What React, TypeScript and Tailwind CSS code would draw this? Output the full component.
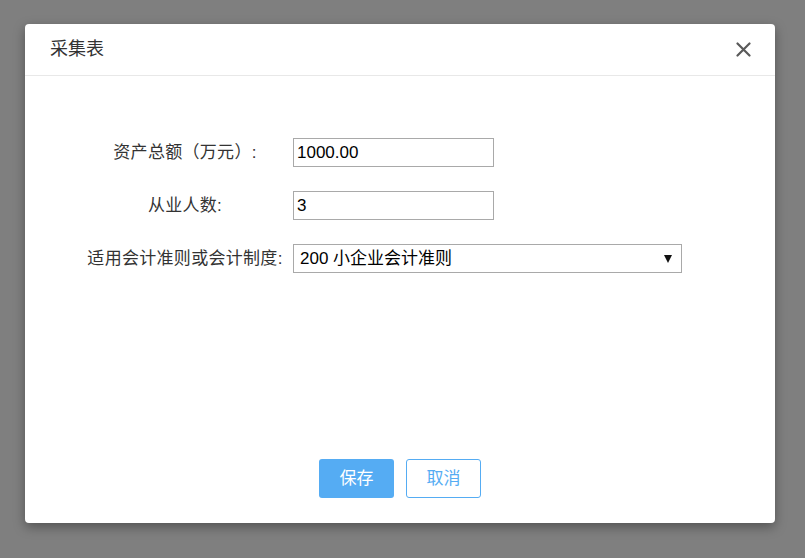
import { useState } from 'react';

const cjk = "font-['Liberation_Sans','Noto_Sans_CJK_SC',sans-serif]";

export default function App() {
  const [form, setForm] = useState({
    assets: '1000.00',
    staff: '3',
    standard: '200',
  });

  return (
    <div className={`w-[805px] h-[558px] bg-[#7f7f7f] pl-[25px] pt-[24px] ${cjk}`}>
      <div className="w-[750px] h-[499px] bg-white rounded-[4px] shadow-[0_4px_12px_rgba(0,0,0,0.35)] flex flex-col">
        {/* header */}
        <div className="h-[52px] flex items-center justify-between pl-[25px] pr-[23px] border-b border-[#e8e8e8]">
          <span className="text-[18px] text-[#333]">采集表</span>
          <button type="button" className="w-[18px] h-[18px] flex items-center justify-center">
            <svg width="15" height="15" viewBox="0 0 15 15">
              <path d="M1.5 1.5 L13.5 13.5 M13.5 1.5 L1.5 13.5" stroke="#5a5a5a" strokeWidth="2.2" strokeLinecap="round" />
            </svg>
          </button>
        </div>

        {/* body */}
        <div className="flex-1 pt-[62px] pl-[60px] flex flex-col gap-[24px]">
          <div className="flex items-center gap-[8px]">
            <label className="w-[200px] text-center text-[17px] tracking-[0.3px] text-[#333]">资产总额（万元）:</label>
            <input
              type="text"
              value={form.assets}
              onChange={(e) => setForm({ ...form, assets: e.target.value })}
              className="w-[201px] h-[29px] border border-[#a9a9a9] px-[3px] text-[17px] text-black outline-none"
            />
          </div>
          <div className="flex items-center gap-[8px]">
            <label className="w-[200px] text-center text-[17px] tracking-[0.3px] text-[#333]">从业人数:</label>
            <input
              type="text"
              value={form.staff}
              onChange={(e) => setForm({ ...form, staff: e.target.value })}
              className="w-[201px] h-[29px] border border-[#a9a9a9] px-[3px] text-[17px] text-black outline-none"
            />
          </div>
          <div className="flex items-center gap-[8px]">
            <label className="w-[200px] text-center text-[17px] tracking-[0.3px] text-[#333]">适用会计准则或会计制度:</label>
            <div className="relative">
              <select
                value={form.standard}
                onChange={(e) => setForm({ ...form, standard: e.target.value })}
                className="appearance-none w-[389px] h-[29px] border border-[#a9a9a9] pl-[6px] text-[17px] text-black bg-white outline-none"
              >
                <option value="200">200 小企业会计准则</option>
                <option value="100">100 企业会计准则</option>
                <option value="300">300 企业会计制度</option>
              </select>
              <svg className="absolute right-[10px] top-[11px] pointer-events-none" width="8" height="8" viewBox="0 0 8 8">
                <path d="M0 0 H8 L4 8 Z" fill="#111" />
              </svg>
            </div>
          </div>
        </div>

        {/* footer */}
        <div className="flex justify-center gap-[12px] pb-[25px]">
          <button type="button" className="w-[75px] h-[39px] rounded-[3px] bg-[#55acf3] text-white text-[17px]">
            保存
          </button>
          <button type="button" className="w-[75px] h-[39px] rounded-[3px] border border-[#55acf3] bg-white text-[#55acf3] text-[17px]">
            取消
          </button>
        </div>
      </div>
    </div>
  );
}
